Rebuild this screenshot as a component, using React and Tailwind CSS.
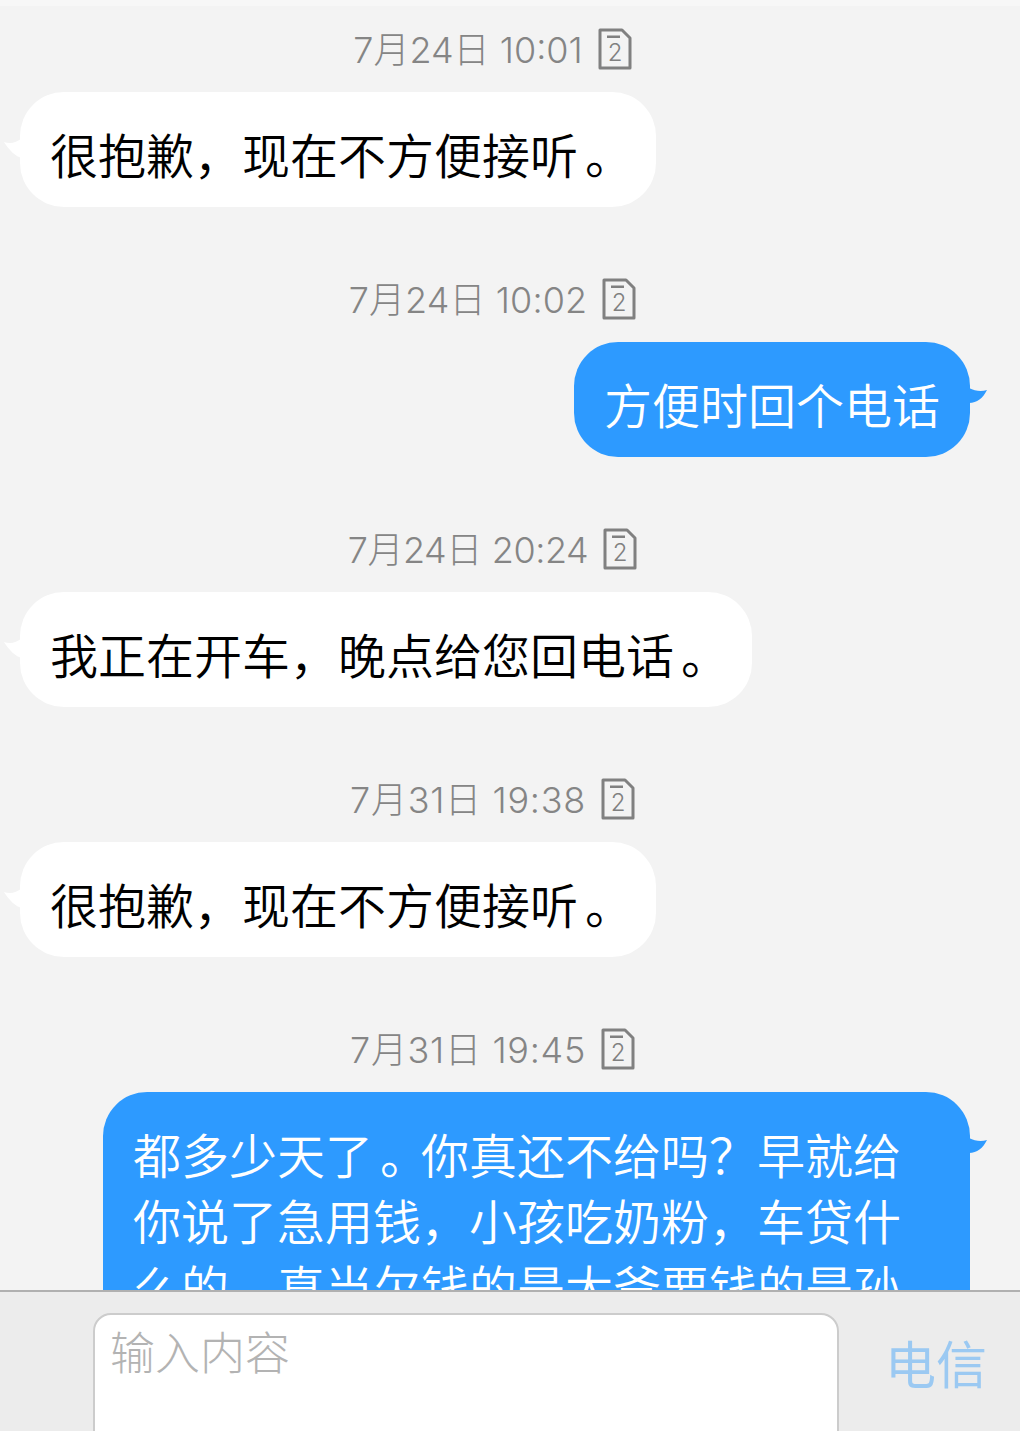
const font = { fontFamily: '"Noto Sans CJK SC", sans-serif' };
const timeFont = { fontFamily: 'Inter, "Noto Sans CJK SC", sans-serif' };

function SimIcon() {
  return (
    <svg width="34" height="42" viewBox="0 0 34 42" className="shrink-0 ml-[15px] mt-[-2px]">
      <path d="M2 2H24L32 10V40H2Z" fill="none" stroke="#808080" strokeWidth="3" strokeLinejoin="round" />
      <rect x="9" y="7.5" width="13" height="2.5" fill="#808080" />
      <text x="17" y="33" textAnchor="middle" fontSize="24" fontWeight="300" fill="#808080" fontFamily="Inter, sans-serif">2</text>
    </svg>
  );
}

function Time({ children, track }) {
  return (
    <div style={timeFont} className="h-[50px] mb-[17px] pr-[35px] flex items-center justify-center text-[#858585] text-[36px] font-light leading-[50px] whitespace-nowrap">
      <span className={track}>{children}</span>
      <SimIcon />
    </div>
  );
}

function Dot() {
  return <span className="ml-[7px] mr-[-7px]">。</span>;
}

function Left({ children }) {
  return (
    <div className="relative ml-[20px] mb-[68px] w-fit rounded-[44px] bg-white px-[30px] pt-[28px] pb-[21px] text-[48px] leading-[66px] font-[350] text-black whitespace-nowrap">
      <svg width="18" height="20" viewBox="0 0 18 20" className="absolute left-[-16px] top-[46px]">
        <path d="M0 4C6 6 12 5 18 0V20C12 19 5 12 0 4Z" fill="#ffffff" />
      </svg>
      {children}
    </div>
  );
}

function Right({ children, wide }) {
  return (
    <div className={`relative ml-auto mr-[50px] mb-[68px] rounded-[44px] bg-[#2d9aff] px-[30px] pt-[28px] pb-[21px] text-[48px] leading-[66px] font-[350] text-white ${wide ? "w-[867px]" : "w-fit whitespace-nowrap"}`}>
      <svg width="18" height="20" viewBox="0 0 18 20" className="absolute right-[-17px] top-[46px]">
        <path d="M18 2C12 4 6 3 0 0V15C8 15 14 10 18 2Z" fill="#2d9aff" />
      </svg>
      {children}
    </div>
  );
}

export default function App() {
  return (
    <div style={font} className="h-[1431px] w-[1020px] overflow-hidden flex flex-col bg-[#f3f3f3]">
      <div className="h-[1290px] shrink-0 overflow-hidden">
        <div className="h-[6px] bg-[#f7f7f7] mb-[19px]" />
        <Time>7月24日 10:01</Time>
        <Left>很抱歉，现在不方便接听<Dot /></Left>
        <Time track="tracking-[0.1px]">7月24日 10:02</Time>
        <Right>方便时回个电话</Right>
        <Time track="tracking-[-0.4px]">7月24日 20:24</Time>
        <Left>我正在开车，晚点给您回电话<Dot /></Left>
        <Time track="tracking-[0.7px]">7月31日 19:38</Time>
        <Left>很抱歉，现在不方便接听<Dot /></Left>
        <Time track="tracking-[0.7px]">7月31日 19:45</Time>
        <Right wide>都多少天了<Dot />你真还不给吗？早就给你说了急用钱，小孩吃奶粉，车贷什么的，真当欠钱的是大爷要钱的是孙子</Right>
      </div>
      <div className="flex-1 border-t-2 border-[#b0b0b0] bg-[#ececec] flex items-start">
        <div className="ml-[93px] mt-[21px] w-[746px] h-[140px] rounded-[18px] border-2 border-[#cccccc] bg-white pl-[15px] pt-[6px] text-[45px] leading-[60px] font-light text-[#b3b3b3]">输入内容</div>
        <div className="ml-[46px] mt-[37px] text-[51px] leading-[66px] text-[#9bc9f2]">电信</div>
      </div>
    </div>
  );
}
